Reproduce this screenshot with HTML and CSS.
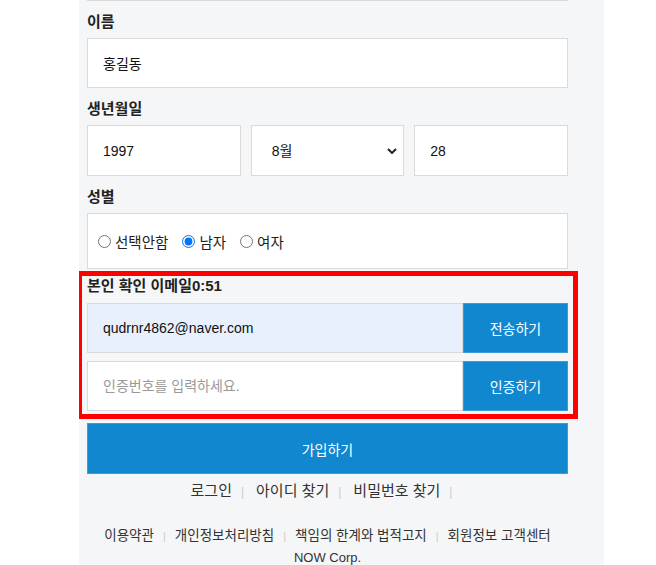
FILE: index.html
```html
<!DOCTYPE html>
<html lang="ko">
<head>
<meta charset="utf-8">
<title>회원가입</title>
<link rel="stylesheet" href="styles.css">
</head>
<body>
<div class="page">
  <div class="form">
    <div class="topline"></div>

    <div class="label">이름</div>
    <input class="field" type="text" value="홍길동">

    <div class="label">생년월일</div>
    <div class="birth">
      <input class="field" type="text" value="1997">
      <div class="select-wrap">
        <select class="field select"><option>8월</option></select>
        <svg class="chev" width="10" height="6" viewBox="0 0 10 6"><polyline points="1,1 5,5 9,1" fill="none" stroke="#222" stroke-width="2"/></svg>
      </div>
      <input class="field" type="text" value="28">
    </div>

    <div class="label">성별</div>
    <div class="gender">
      <label class="radio"><input class="radio-input" type="radio" name="gender">선택안함</label>
      <label class="radio"><input class="radio-input" type="radio" name="gender" checked>남자</label>
      <label class="radio"><input class="radio-input" type="radio" name="gender">여자</label>
    </div>

    <div class="verify">
      <div class="label label-verify">본인 확인 이메일<span class="timer">0:51</span></div>
      <div class="vrow">
        <input class="field email" type="text" value="qudrnr4862@naver.com">
        <button class="vbtn">전송하기</button>
      </div>
      <div class="vrow">
        <input class="field" type="text" placeholder="인증번호를 입력하세요.">
        <button class="vbtn">인증하기</button>
      </div>
    </div>

    <button class="submit">가입하기</button>

    <div class="links">
      <a class="link">로그인</a><span class="sep">|</span><a class="link">아이디 찾기</a><span class="sep">|</span><a class="link">비밀번호 찾기</a><span class="sep">|</span>
    </div>

    <div class="footer">
      <div class="footer-links">
        <a class="flink">이용약관</a><span class="fsep">|</span><a class="flink">개인정보처리방침</a><span class="fsep">|</span><a class="flink">책임의 한계와 법적고지</a><span class="fsep">|</span><a class="flink">회원정보 고객센터</a>
      </div>
      <div class="corp">NOW Corp.</div>
    </div>
  </div>
</div>
</body>
</html>
```

FILE: styles.css
```css
html, body {
  margin: 0;
  padding: 0;
  background: #fff;
  overflow: hidden;
}

body {
  font-family: "Liberation Sans", "Noto Sans CJK KR", sans-serif;
  color: #222;
}

.page {
  margin-left: 79px;
  width: 525px;
  height: 565px;
  background: #f5f6f7;
  overflow: hidden;
}

.form {
  margin-left: 8px;
  width: 481px;
}

.topline {
  height: 1px;
  background: #dadada;
}

.label {
  margin: 11px 0 6px;
  height: 20px;
  line-height: 20px;
  font-size: 15px;
  font-weight: bold;
  color: #222;
}

.field {
  display: block;
  box-sizing: border-box;
  width: 100%;
  height: 50px;
  margin: 0;
  padding: 0 15px;
  border: 1px solid #dadada;
  background: #fff;
  font-family: inherit;
  font-size: 14px;
  color: #111;
  outline: none;
}

.field::placeholder {
  color: #999;
}

.birth {
  display: grid;
  grid-template-columns: repeat(3, minmax(0, 1fr));
  gap: 10px;
}

.birth .field {
  height: 51px;
}

.select-wrap {
  position: relative;
  min-width: 0;
}

.select {
  appearance: none;
  -webkit-appearance: none;
  padding-left: 20px;
  border-radius: 0;
}

.chev {
  position: absolute;
  right: 7px;
  top: 23px;
  pointer-events: none;
}

.gender {
  box-sizing: border-box;
  height: 56px;
  border: 1px solid #dadada;
  background: #fff;
  display: flex;
  align-items: center;
  gap: 9px;
  padding: 0 5px;
}

.radio {
  display: flex;
  align-items: center;
  font-size: 14.5px;
  color: #222;
}

.radio-input {
  width: 13px;
  height: 13px;
  margin: 0 4px 0 5px;
}

.verify {
  position: relative;
  padding-top: 7px;
}

.verify::after {
  content: "";
  position: absolute;
  left: -10px;
  right: -10px;
  top: 2px;
  bottom: -8px;
  border: 5px solid #ff0000;
  pointer-events: none;
}

.label-verify {
  margin: 0 0 7px;
}

.vrow {
  display: flex;
  height: 50px;
}

.vrow + .vrow {
  margin-top: 8px;
}

.vrow .field {
  flex: 1 1 auto;
  width: auto;
  min-width: 0;
}

.email {
  background: #e8f0fe;
}

.vbtn {
  flex: 0 0 105px;
  height: 50px;
  margin: 0;
  border: 1px solid #3d9bd8;
  background: #1187cf;
  color: #fff;
  font-family: inherit;
  font-size: 14px;
}

.submit {
  display: block;
  box-sizing: border-box;
  width: 100%;
  height: 51px;
  margin: 12px 0 0;
  border: 1px solid #3d9bd8;
  background: #1187cf;
  color: #fff;
  font-family: inherit;
  font-size: 14px;
}

.links {
  margin-top: 7px;
  height: 20px;
  line-height: 20px;
  text-align: center;
  font-size: 15px;
  color: #333;
  white-space: nowrap;
}

.link {
  color: #333;
}

.sep {
  font-size: 12px;
  color: #ccc;
  margin: 0 12px 0 9px;
}

.footer {
  margin-top: 24px;
  text-align: center;
  font-size: 13.5px;
  line-height: 22px;
  color: #333;
  white-space: nowrap;
}

.corp {
  font-size: 13px;
}

.flink {
  color: #333;
}

.fsep {
  font-size: 11px;
  color: #ccc;
  margin: 0 9px;
}
```
